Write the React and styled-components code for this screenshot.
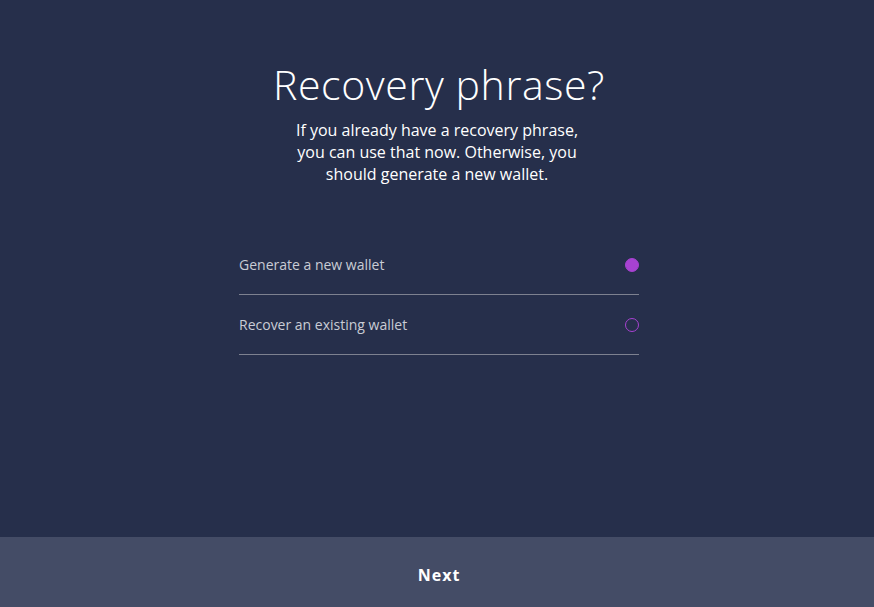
import React, { useState } from 'react';
import styled, { createGlobalStyle } from 'styled-components';

const GlobalStyle = createGlobalStyle`
  html, body {
    margin: 0;
    padding: 0;
    background: #262f4b;
  }
  * {
    box-sizing: border-box;
  }
`;

const Screen = styled.div`
  display: flex;
  flex-direction: column;
  height: 607px;
  background: #262f4b;
  font-family: 'Open Sans', 'Liberation Sans', sans-serif;
  color: #ffffff;
`;

const Content = styled.div`
  flex: 1;
  display: flex;
  flex-direction: column;
  align-items: center;
  padding-top: 59px;
`;

const Title = styled.h1`
  margin: 0 0 0 4px;
  font-weight: 300;
  font-size: 41px;
  line-height: 50px;
  letter-spacing: 0.6px;
  color: #ffffff;
`;

const Subtitle = styled.p`
  margin: 10px 0 0;
  width: 300px;
  text-align: center;
  font-size: 16px;
  line-height: 22px;
  color: #ffffff;
`;

const Options = styled.div`
  width: 400px;
  margin: 50px 0 0 4px;
  display: flex;
  flex-direction: column;
`;

const Option = styled.label`
  display: flex;
  align-items: center;
  justify-content: space-between;
  height: 60px;
  border-bottom: 1px solid #7d8190;
  font-size: 14px;
  color: #c9ccd5;
  cursor: pointer;
`;

const Radio = styled.span`
  width: 14px;
  height: 14px;
  margin-right: 0;
  border-radius: 50%;
  border: 1px solid #a742d1;
  background: ${(p) => (p.$checked ? '#a742d1' : 'transparent')};
`;

const Footer = styled.button`
  height: 70px;
  border: 0;
  padding: 6px 0 0 4px;
  background: #444c66;
  color: #ffffff;
  font-family: 'Open Sans', 'Liberation Sans', sans-serif;
  font-weight: 700;
  font-size: 16px;
  letter-spacing: 1px;
  cursor: pointer;
`;

const options = [
  { id: 'new', label: 'Generate a new wallet' },
  { id: 'recover', label: 'Recover an existing wallet' },
];

export default function App() {
  const [selected, setSelected] = useState('new');

  return (
    <Screen>
      <GlobalStyle />
      <Content>
        <Title>Recovery phrase?</Title>
        <Subtitle>
          If you already have a recovery phrase, you can use that now. Otherwise, you
          should generate a new wallet.
        </Subtitle>
        <Options>
          {options.map((o) => (
            <Option key={o.id} onClick={() => setSelected(o.id)}>
              {o.label}
              <Radio $checked={selected === o.id} />
            </Option>
          ))}
        </Options>
      </Content>
      <Footer>Next</Footer>
    </Screen>
  );
}
